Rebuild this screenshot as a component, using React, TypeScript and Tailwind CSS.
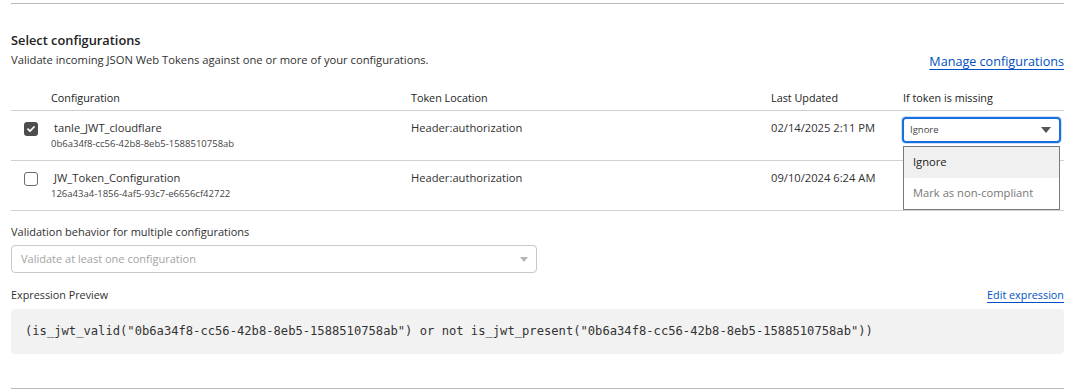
import React from "react";

interface ConfigRow {
  name: string;
  id: string;
  location: string;
  updated: string;
  checked: boolean;
}

const rows: ConfigRow[] = [
  {
    name: "tanle_JWT_cloudflare",
    id: "0b6a34f8-cc56-42b8-8eb5-1588510758ab",
    location: "Header:authorization",
    updated: "02/14/2025 2:11 PM",
    checked: true,
  },
  {
    name: "JW_Token_Configuration",
    id: "126a43a4-1856-4af5-93c7-e6656cf42722",
    location: "Header:authorization",
    updated: "09/10/2024 6:24 AM",
    checked: false,
  },
];

const Checkbox: React.FC<{ checked: boolean }> = ({ checked }) =>
  checked ? (
    <span className="flex h-[14px] w-[14px] items-center justify-center rounded-[3px] bg-[#4d4d4d]">
      <svg width="10" height="10" viewBox="0 0 10 10" fill="none">
        <path d="M2 5.2l2 2L8 3" stroke="#fff" strokeWidth="1.8" strokeLinecap="round" strokeLinejoin="round" />
      </svg>
    </span>
  ) : (
    <span className="block h-[14px] w-[14px] rounded-[3px] border border-[#6b6b6b] bg-white" />
  );

const App: React.FC = () => {
  return (
    <div className="w-[1073px] h-[390px] bg-white pl-[11px] pr-[9px] pt-[3px] font-['Open_Sans',sans-serif] text-[#313131]">
      <div className="border-t border-[#b8b8b8]">
        <div className="flex items-end justify-between">
          <div>
            <h2 className="mt-[26px] text-[12.8px] leading-[20px] font-semibold text-[#222]">
              Select configurations
            </h2>
            <p className="mt-[2px] text-[11.2px] leading-[16px]">
              Validate incoming JSON Web Tokens against one or more of your configurations.
            </p>
          </div>
          <a className="translate-y-[2px] text-[12.6px] leading-[16px] text-[#0051c3] underline underline-offset-[3px]">
            Manage configurations
          </a>
        </div>

        {/* table */}
        <div className="mt-[18px]">
          <div className="flex h-[25px] items-center border-b border-[#d0d0d0] text-[10.8px] font-medium text-[#222]">
            <div className="w-[40px]" />
            <div className="w-[360px]">Configuration</div>
            <div className="w-[360px]">Token Location</div>
            <div className="w-[132px]">Last Updated</div>
            <div className="flex-1">If token is missing</div>
          </div>
          {rows.map((row, i) => (
            <div key={row.id} className="flex h-[50px] items-start border-b border-[#d0d0d0] text-[11.2px]">
              <div className="w-[40px] pl-[13px] pt-[11px]">
                <Checkbox checked={row.checked} />
              </div>
              <div className="w-[360px] pt-[9px]">
                <div className="pl-[3px] leading-[16px]">{row.name}</div>
                <div className="mt-[1px] text-[9.5px] leading-[14px] text-[#444]">{row.id}</div>
              </div>
              <div className="w-[360px] pt-[9px] leading-[16px]">{row.location}</div>
              <div className="w-[132px] pt-[9px] leading-[16px]">{row.updated}</div>
              <div className="flex-1 pt-[6px]">
                {i === 0 && (
                  <div className="relative w-[159px] -ml-[1px]">
                    <div className="flex h-[26px] items-center justify-between rounded-[4px] border-2 border-[#1a6fe0] pl-[6px] pr-[8px] shadow-[0_0_0_1px_#cfe0fa]">
                      <span className="text-[9.5px] text-[#444]">Ignore</span>
                      <svg width="10" height="6" viewBox="0 0 10 6">
                        <path d="M0 0h10L5 6z" fill="#555" />
                      </svg>
                    </div>
                    <div className="absolute left-[1px] top-[29px] z-10 w-[157px] border border-[#7a7a7a] bg-white text-[11.2px]">
                      <div className="flex h-[31px] items-center bg-[#f0f0f0] pl-[9px] text-[#222]">Ignore</div>
                      <div className="flex h-[31px] items-center pl-[9px] text-[#777]">Mark as non-compliant</div>
                    </div>
                  </div>
                )}
              </div>
            </div>
          ))}
        </div>

        {/* validation behavior */}
        <label className="mt-[13px] block text-[11px] leading-[16px]">
          Validation behavior for multiple configurations
        </label>
        <div className="mt-[5px] flex h-[28px] w-[526px] items-center justify-between rounded-[4px] border border-[#c8c8c8] pl-[9px] pr-[8px]">
          <span className="text-[11px] text-[#a3a3a3]">Validate at least one configuration</span>
          <svg width="8" height="5" viewBox="0 0 8 5">
            <path d="M0 0h8L4 5z" fill="#b5b5b5" />
          </svg>
        </div>

        {/* expression preview */}
        <div className="mt-[14px] flex items-center justify-between text-[10.8px] leading-[16px]">
          <span>Expression Preview</span>
          <a className="text-[#0051c3] underline underline-offset-[3px]">Edit expression</a>
        </div>
        <div className="mt-[6px] flex h-[45px] items-center rounded-[4px] bg-[#f2f2f2] pl-[14px] font-['DejaVu_Sans_Mono',monospace] text-[12.15px] text-[#333]">
          (is_jwt_valid("0b6a34f8-cc56-42b8-8eb5-1588510758ab") or not is_jwt_present("0b6a34f8-cc56-42b8-8eb5-1588510758ab"))
        </div>

        <div className="mt-[34px] border-t border-[#b8b8b8]" />
      </div>
    </div>
  );
};

export default App;
